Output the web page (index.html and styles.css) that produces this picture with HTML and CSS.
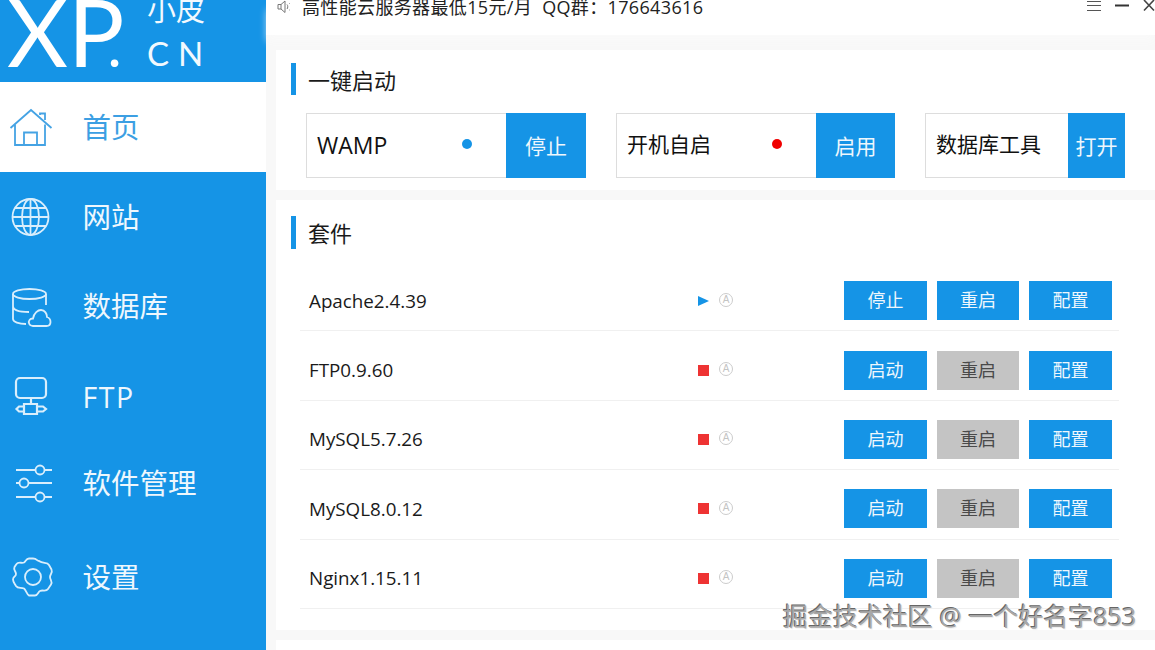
FILE: index.html
```html
<!DOCTYPE html>
<html lang="zh">
<head>
<meta charset="utf-8">
<title>小皮面板</title>
<link rel="stylesheet" href="styles.css">
</head>
<body>
<div class="app">
  <aside class="sidebar">
    <div class="logo">
      <span class="logo-xp">XP<span class="logo-dot">.</span></span>
      <span class="logo-side"><span class="logo-cn">小皮</span><span class="logo-en">CN</span></span>
    </div>
    <nav class="nav">
      <a class="nav-item active">
        <svg class="nav-icon" viewBox="0 0 44 44"><path d="M0.500 23 21 5 41.500 23M5 19.500V40H35V19.500M14 40V27.500H27V40M30 10V8.500H35V15"/></svg>
        <span>首页</span>
      </a>
      <a class="nav-item">
        <svg class="nav-icon" viewBox="0 0 44 44"><circle cx="20.500" cy="22" r="18"/><ellipse cx="20.500" cy="22" rx="8.500" ry="18"/><path d="M20.500 4V40M2.500 22H38.500M5 13H36M5 31H36"/></svg>
        <span>网站</span>
      </a>
      <a class="nav-item">
        <svg class="nav-icon" viewBox="0 0 44 44"><ellipse cx="19.500" cy="9" rx="16.500" ry="5"/><path d="M3 9V34C3 37 9 39 16 39M36 9V20M3 21C3 25 9 27 19 27"/><path d="M23 41C19 41 18 37 19.500 35 20.500 33.500 22 33.500 23 33.500 24 28 28 25 31 25 35 25 37 29 37 32 40 33 40.500 35 40.500 37 40.500 39.500 39 41 36.500 41Z"/></svg>
        <span>数据库</span>
      </a>
      <a class="nav-item">
        <svg class="nav-icon thick" viewBox="0 0 44 44"><rect x="6" y="3" width="30" height="20" rx="4"/><path d="M21 23V29M14 29H27V39H14ZM14 31.500H9L6.500 34 9 36.500H14M27 31.500H33L36 34 33 36.500H27"/></svg>
        <span class="nav-latin">FTP</span>
      </a>
      <a class="nav-item">
        <svg class="nav-icon" viewBox="0 0 44 44"><path d="M6 9H25.500M34.500 9H42M6 22H9.500M18.500 22H42M6 36H25.500M34.500 36H42"/><circle cx="30" cy="9" r="4.500"/><circle cx="14" cy="22" r="4.500"/><circle cx="30" cy="36" r="4.500"/></svg>
        <span>软件管理</span>
      </a>
      <a class="nav-item">
        <svg class="nav-icon" viewBox="0 0 44 44"><path d="M29 6C27 6 27 3.500 23 3.500H19C16 3.500 16 6 14 7.500 12 8.500 8 6.500 6.500 9L4.500 12C3 15 6 16 6 19 6 22 3 21 3 24.500 3 27 5 29 6 31 8 34 11 32 14 33.500 16 35 16.500 39 19 40.500H25C28 40.500 28 37 30 36 33 34.500 36 37 38 34L41 29.500C43 26.500 40 25 40 22 40 19 43 18 41.500 14.500L39 10C37 7 33 9 29 6Z"/><circle cx="23" cy="22" r="8"/></svg>
        <span>设置</span>
      </a>
    </nav>
  </aside>
  <main class="main">
    <header class="topbar">
      <svg class="speaker" viewBox="0 0 14 14"><path d="M1 4.500H4L8 1V12.500L4 9H1ZM4 4.500V9M10 4.500C11 5.500 11 8 10 9M12 3.500 12.600 3.500M12 10H12.600"/></svg>
      <span class="notice">高性能云服务器最低15元/月&nbsp;&nbsp;QQ群：176643616</span>
      <div class="win-controls">
        <svg class="win-icon menu" viewBox="0 0 14 12"><path d="M0 1.500H14M0 5.500H14M0 10.500H14"/></svg>
        <svg class="win-icon min" viewBox="0 0 14 12"><path d="M0 5.500H14"/></svg>
        <svg class="win-icon close" viewBox="0 0 12 12"><path d="M1 0 11 10.500M11 0 1 10.500"/></svg>
      </div>
    </header>
    <section class="card card-start">
      <h2 class="card-title">一键启动</h2>
      <div class="quick">
        <div class="quick-box w-wamp"><span class="quick-name latin">WAMP</span><i class="dot dot-on"></i></div>
        <button class="quick-btn b-wamp">停止</button>
        <div class="quick-box w-auto"><span class="quick-name">开机自启</span><i class="dot dot-off"></i></div>
        <button class="quick-btn b-auto">启用</button>
        <div class="quick-box w-db"><span class="quick-name">数据库工具</span></div>
        <button class="quick-btn b-db">打开</button>
      </div>
    </section>
    <section class="card card-suite">
      <h2 class="card-title">套件</h2>
      <ul class="rows">
        <li class="row">
          <span class="row-name">Apache2.4.39</span>
          <i class="state-run"></i><span class="auto">A</span>
          <button class="btn">停止</button><button class="btn">重启</button><button class="btn">配置</button>
        </li>
        <li class="row">
          <span class="row-name">FTP0.9.60</span>
          <i class="state-stop"></i><span class="auto">A</span>
          <button class="btn">启动</button><button class="btn off">重启</button><button class="btn">配置</button>
        </li>
        <li class="row">
          <span class="row-name">MySQL5.7.26</span>
          <i class="state-stop"></i><span class="auto">A</span>
          <button class="btn">启动</button><button class="btn off">重启</button><button class="btn">配置</button>
        </li>
        <li class="row">
          <span class="row-name">MySQL8.0.12</span>
          <i class="state-stop"></i><span class="auto">A</span>
          <button class="btn">启动</button><button class="btn off">重启</button><button class="btn">配置</button>
        </li>
        <li class="row">
          <span class="row-name">Nginx1.15.11</span>
          <i class="state-stop"></i><span class="auto">A</span>
          <button class="btn">启动</button><button class="btn off">重启</button><button class="btn">配置</button>
        </li>
      </ul>
    </section>
    <div class="card card-next"></div>
  </main>
</div>
<div class="watermark">掘金技术社区 @ 一个好名字853</div>
</body>
</html>
```
FILE: styles.css
```css
* { box-sizing: border-box; }
html, body { margin: 0; height: 100%; overflow: hidden; }
body {
  font-family: "Open Sans", "Noto Sans CJK SC", sans-serif;
  color: #111;
  background: #fff;
}
.app { display: flex; width: 1155px; height: 650px; }

/* sidebar */
.sidebar { width: 266px; flex: none; background: #1594e6; color: #fff; display: flex; flex-direction: column; }
.logo { height: 82px; overflow: hidden; display: flex; padding-left: 7px; }
.logo-xp {
  font-family: Lato, sans-serif;
  font-weight: 400;
  font-size: 94px;
  line-height: 94px;
  height: 94px;
  width: 140px;
  flex: none;
  margin-top: -16px;
  color: #fff;
}
.logo-dot { font-size: 60px; margin-left: -17px; }
.logo-side { display: flex; flex-direction: column; margin-top: -10px; color: #f2f9fe; }
.logo-cn { font-size: 29px; font-weight: 400; line-height: 40px; height: 40px; }
.logo-en { font-family: Lato, sans-serif; font-size: 33px; font-weight: 400; line-height: 38px; letter-spacing: 9px; margin-top: 4px; }

.nav { display: grid; grid-template-rows: 90px 90px 89px 92px 80px 108px; }
.nav-item {
  display: flex;
  align-items: center;
  padding-left: 10px;
  font-size: 28.500px;
  line-height: 1;
  color: #eef7fd;
}
.nav-item.active { background: #fff; color: #3c9fe3; }
.nav-latin { letter-spacing: 1.500px; }
.nav-icon {
  width: 44px;
  height: 44px;
  flex: none;
  margin-right: 28.500px;
  fill: none;
  stroke: #d9eefc;
  stroke-width: 1.800;
  overflow: visible;
}
.nav-icon.thick { stroke-width: 2.200; }
.active .nav-icon { stroke: #45a3e4; }

/* main */
.main { flex: 1; min-width: 0; background: #f8f8f8; display: flex; flex-direction: column; }
.topbar {
  height: 35px;
  flex: none;
  background: #fff;
  display: flex;
  align-items: flex-start;
  padding-left: 11px;
  box-shadow: 0 8px 8px -2px #fafafa;
}
.speaker { width: 14px; height: 14px; flex: none; margin-right: 11px; fill: none; stroke: #777; stroke-width: 1; }
.notice { font-size: 18px; line-height: 24px; margin-top: -5px; color: #222; white-space: pre; letter-spacing: 0.350px; }
.win-controls { margin-left: auto; display: flex; gap: 14px; align-items: flex-start; }
.win-icon { width: 14px; height: 12px; flex: none; fill: none; stroke: #555; stroke-width: 1; }
.win-icon.min { stroke: #333; stroke-width: 2; }
.win-icon.close { width: 12px; stroke: #444; stroke-width: 1.600; }

.card { background: #fff; margin-left: 10px; flex: none; }
.card-start { height: 140px; margin-top: 15px; padding: 13px 0 0 15px; }
.card-suite { height: 430px; margin-top: 10px; padding: 16px 0 0 15px; }
.card-next { flex: 1; margin-top: 10px; }

.card-title {
  margin: 0;
  height: 32px;
  border-left: 5px solid #1594e6;
  padding-left: 12px;
  font-size: 22px;
  font-weight: 400;
  line-height: 34px;
  color: #1a1a1a;
}
.card-suite .card-title { height: 33px; line-height: 35px; }

.quick { display: flex; margin: 18px 0 0 15px; height: 65px; }
.quick-box {
  height: 65px;
  border: 1px solid #ddd;
  border-right: 0;
  display: flex;
  align-items: center;
  padding-left: 10px;
  font-size: 21px;
  position: relative;
}
.quick-name { line-height: 1; margin-top: -2px; }
.quick-name.latin { font-size: 23px; margin-top: 0; }
.w-wamp { width: 200px; }
.w-auto { width: 200px; }
.w-db { width: 143px; }
.dot { position: absolute; top: 25px; width: 10px; height: 10px; border-radius: 50%; }
.dot-on { left: 155px; background: #1594e6; }
.dot-off { left: 155px; background: #f00000; }
.quick-btn {
  height: 65px;
  border: 0;
  padding: 0 0 2px;
  background: #1594e6;
  color: #eef7fd;
  font: inherit;
  font-size: 21px;
}
.b-wamp { width: 80px; margin-right: 30px; }
.b-auto { width: 79px; margin-right: 30px; }
.b-db { width: 57px; }

.rows { list-style: none; margin: 13px 36px 0 9px; padding: 0; }
.row {
  height: 69.400px;
  border-bottom: 1px solid #f0f0f0;
  display: flex;
  align-items: center;
  padding: 9px 7px 0 9px;
}
.row-name { width: 389px; font-size: 18.800px; color: #1a1a1a; }
.state-run { width: 0; height: 0; border-left: 11px solid #1594e6; border-top: 5.500px solid transparent; border-bottom: 5.500px solid transparent; flex: none; }
.state-stop { width: 11px; height: 11px; background: #ee3333; flex: none; }
.auto {
  width: 14px;
  height: 14px;
  margin-left: 10px;
  margin-top: -2px;
  border: 1px solid #ccc;
  border-radius: 50%;
  color: #c4c4c4;
  font-size: 10px;
  line-height: 12px;
  text-align: center;
  font-family: "Liberation Sans", sans-serif;
  flex: none;
}
.btn {
  width: 83px;
  height: 39px;
  border: 0;
  padding: 0;
  margin-left: 10px;
  background: #1594e6;
  color: #eef7fd;
  font: inherit;
  font-size: 18px;
  line-height: 39px;
}
.btn:nth-last-child(2) { width: 82px; }
.auto + .btn { margin-left: auto; }
.btn.off { background: #c4c4c4; color: #4a4a4a; }

.watermark {
  position: absolute;
  left: 783px;
  top: 600px;
  font-size: 25px;
  line-height: 33px;
  color: #a8a8a8;
  text-shadow: -1px -1px 0 #666, 1px 1px 1px #eee;
  white-space: nowrap;
}
```
